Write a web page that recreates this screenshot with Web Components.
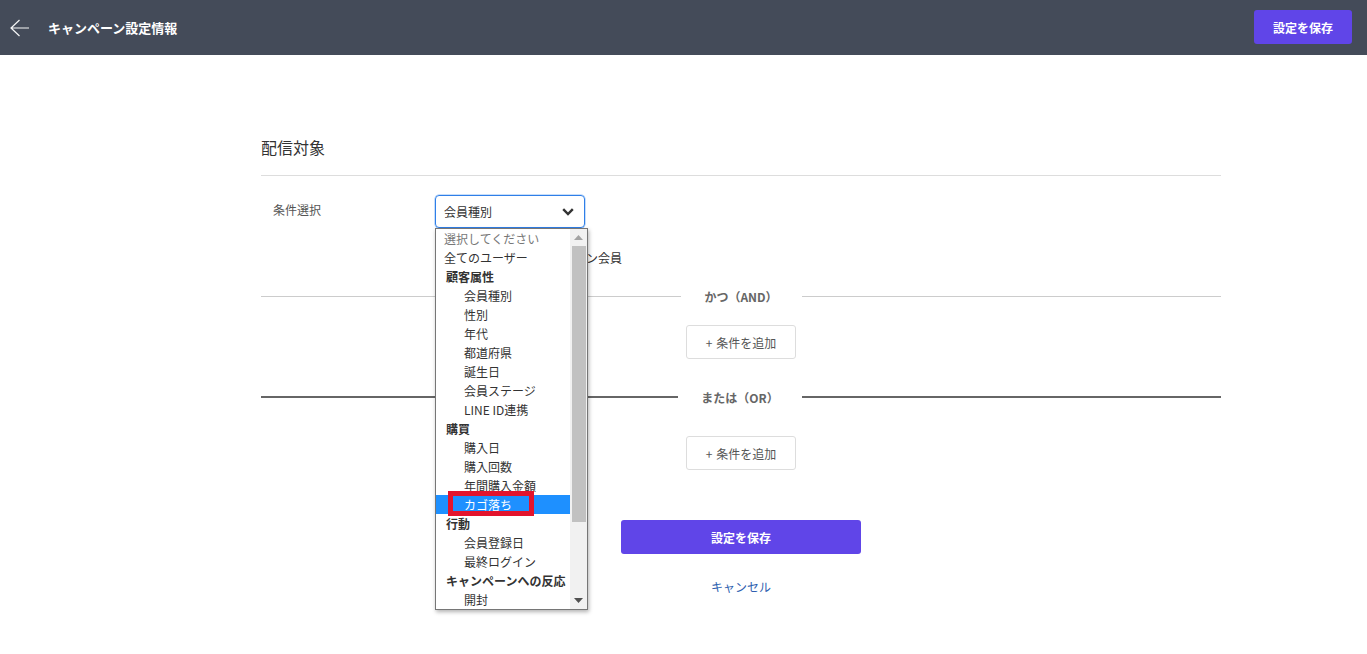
<!DOCTYPE html>
<html lang="ja"><head><meta charset="utf-8"><title>キャンペーン設定情報</title>
<style>
html,body{margin:0;padding:0;background:#fff}
body{font-family:"Noto Sans CJK JP","Noto Sans",sans-serif;color:#333;font-size:12px;height:654px;overflow:hidden}
</style></head><body>
<campaign-page></campaign-page>
<script>
const def=(name,html,setup)=>customElements.define(name,class extends HTMLElement{
  constructor(){super();this.attachShadow({mode:'open'}).innerHTML=html;}
  connectedCallback(){if(setup)setup(this)}
});
def('primary-btn',`<style>:host{display:block;box-sizing:border-box;background:#6045e8;color:#fff;border-radius:3px;font-weight:700;font-size:12px;height:34px;display:flex;align-items:center;justify-content:center}</style><slot></slot>`);
def('add-btn',`<style>:host{display:flex;box-sizing:border-box;width:110px;height:34px;border:1px solid #ddd;border-radius:3px;align-items:center;justify-content:center;gap:4px;color:#555;font-size:12px;background:#fff}</style><slot></slot>`);
def('top-bar',`<style>:host{display:flex;align-items:center;height:55px;background:#444b59;color:#fff}
svg{margin-left:10px;flex:none}
.t{margin-left:19px;font-size:13px;font-weight:700;flex:1}
primary-btn{width:98px;margin-right:15px;margin-top:-1px}</style>
<svg width="19" height="18" viewBox="0 0 19 18" fill="none" stroke="#f4f5f6" stroke-width="1.2"><path d="M9.5 1 1 9l8.5 8M1 9h18"/></svg>
<div class="t"><slot></slot></div><primary-btn>設定を保存</primary-btn>`);
def('cond-divider',`<style>:host{display:flex;align-items:center;color:#666;font-weight:700;font-size:12px;height:20px}
.l{flex:1;background:#ccc;height:1px}.c{width:122px;text-align:center;margin-left:-1px}
:host([strong]) .l{background:#666;height:2px}
:host([strong]) .c{width:124px;margin:0}
.l.r{flex:none;width:419px}</style><div class="l"></div><div class="c"><slot></slot></div><div class="l r"></div>`);
const groups=[['選択してください','ph'],['全てのユーザー','top'],['顧客属性','g'],['会員種別'],['性別'],['年代'],['都道府県'],['誕生日'],['会員ステージ'],['LINE ID連携'],['購買','g'],['購入日'],['購入回数'],['年間購入金額'],['カゴ落ち','sel'],['行動','g'],['会員登録日'],['最終ログイン'],['キャンペーンへの反応','g'],['開封']];
def('option-list',`<style>:host{display:flex;position:absolute;left:0;top:33px;width:153px;height:382px;box-sizing:border-box;border:1px solid #767676;background:#fff;box-shadow:1px 2px 4px rgba(0,0,0,.3);z-index:2;color:#333}
.list{width:134px;flex:none;overflow:hidden}
.o{height:19px;line-height:19px;font-size:12px;white-space:nowrap;padding-left:28px;position:relative}
.top,.ph{padding-left:8px}.ph{color:#777}
.g{padding-left:10px;font-weight:700}
.sel{background:#1e90ff;color:#fff}
.sel::after{content:"";position:absolute;left:12px;top:-4px;width:86px;height:25px;box-sizing:border-box;border:5px solid #e3142d}
.bar{flex:1;background:#f1f1f1;display:flex;flex-direction:column;align-items:center}
.arr{height:17px;flex:none;display:flex;align-items:center;justify-content:center}
.th{width:14px;flex:1;background:#c1c1c1;margin-bottom:70px}</style>
<div class="list"></div><div class="bar"><div class="arr"><svg width="9" height="5"><path d="M4.5 0 9 5H0z" fill="#a3a3a3"/></svg></div><div class="th"></div><div class="arr" style="margin-top:auto"><svg width="9" height="5"><path d="M0 0h9L4.5 5z" fill="#505050"/></svg></div></div>`,
el=>{const l=el.shadowRoot.querySelector('.list');if(l.children.length)return;for(const [t,c] of groups){const d=document.createElement('div');d.className='o '+(c||'');d.textContent=t;l.append(d)}});
def('select-box',`<style>:host{display:block;position:relative;width:150px;height:33px}
.b{box-sizing:border-box;height:33px;border:1px solid #2f7fe8;border-radius:4px;box-shadow:0 0 0 .5px #8fbdf5;display:flex;align-items:center;justify-content:space-between;padding:0 10px 0 8px;font-size:12px;color:#333}
</style><div class="b"><span><slot></slot></span><svg width="12" height="8" viewBox="0 0 12 8" fill="none" stroke="#333" stroke-width="2.4"><path d="M1.2 1.2 6 6l4.8-4.8"/></svg></div><option-list></option-list>`);
def('campaign-page',`<style>:host{display:block}
main{box-sizing:border-box;width:960px;margin-left:261px;padding-top:80px}
h2{margin:0;font-weight:400;font-size:16px;line-height:24px;height:40px;border-bottom:1px solid #ddd;color:#333;box-sizing:content-box}
.row{display:grid;grid-template-columns:162px 1fr;padding:19px 0 0 12px;height:54px}
.lab{color:#555;line-height:30px}
.opt{padding-left:289px;line-height:18px;height:18px;margin-top:0;color:#333}
.d1{margin-top:19px}
.ab{display:flex;justify-content:center;margin:19px 0 0}
.ab add-btn{margin-left:0}
.d2{margin-top:28px}
.save{display:flex;justify-content:center;margin-top:50px}.save primary-btn{width:240px}
.cancel{text-align:center;margin-top:24px;color:#2f5fb0;font-size:12px;line-height:18px}
</style>
<top-bar>キャンペーン設定情報</top-bar>
<main><h2>配信対象</h2>
<div class="row"><div class="lab">条件選択</div><select-box>会員種別</select-box></div>
<div class="opt">マガジン会員</div>
<cond-divider class="d1">かつ（AND）</cond-divider>
<div class="ab"><add-btn><span>+</span><span>条件を追加</span></add-btn></div>
<cond-divider class="d2" strong>または（OR）</cond-divider>
<div class="ab" style="margin-top:29px"><add-btn><span>+</span><span>条件を追加</span></add-btn></div>
<div class="save"><primary-btn>設定を保存</primary-btn></div>
<div class="cancel">キャンセル</div>
</main>`);
</script></body></html>
